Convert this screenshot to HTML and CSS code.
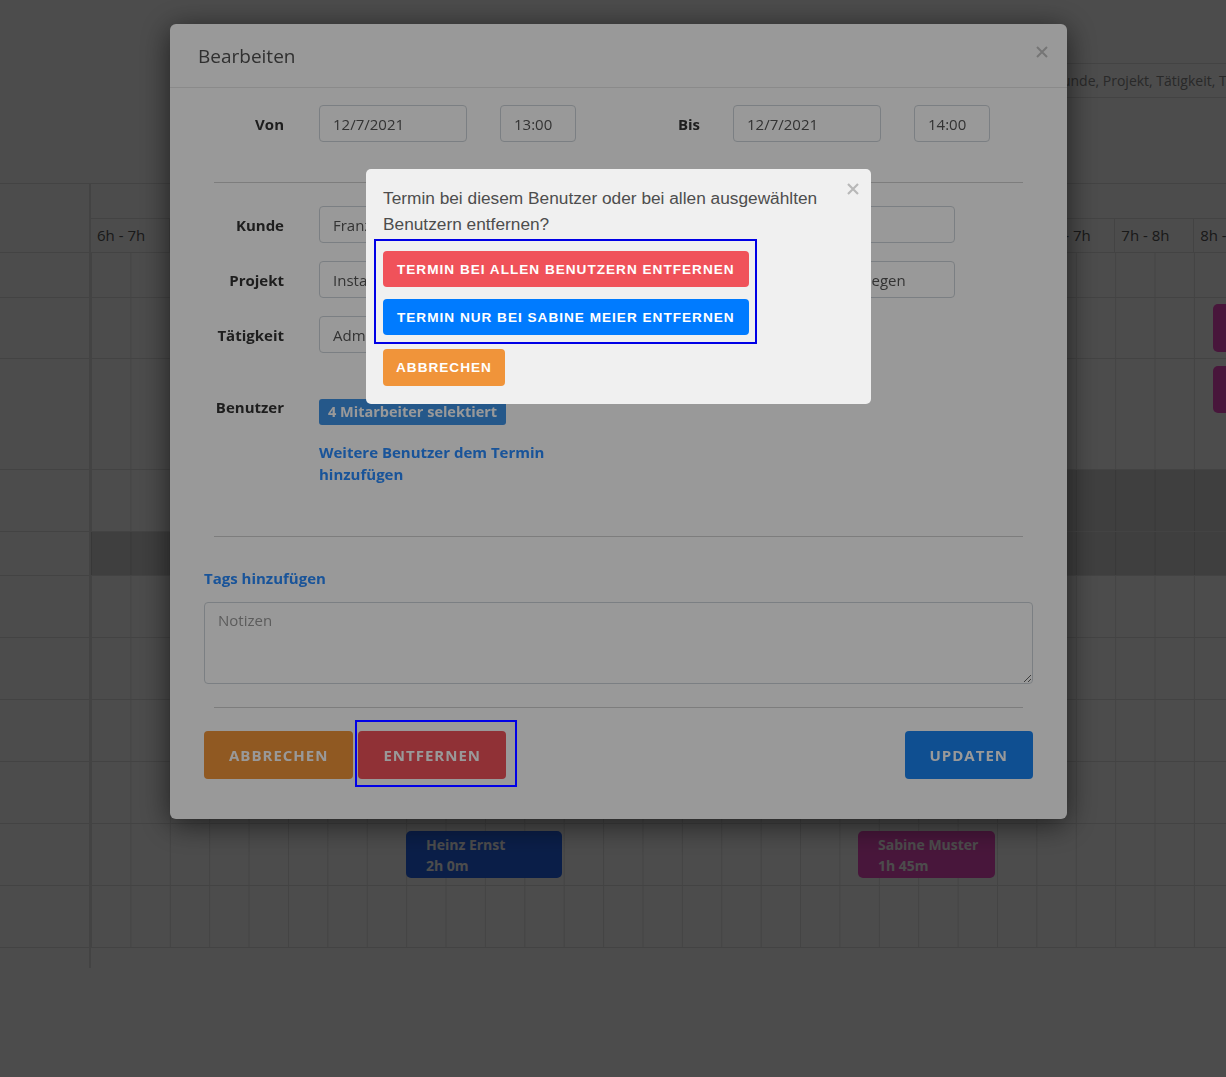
FILE: index.html
```html
<!DOCTYPE html>
<html lang="de">
  <head>
    <meta charset="UTF-8" />
    <meta name="viewport" content="width=device-width, initial-scale=1.0" />
    <title>Planer - Termin bearbeiten</title>
    <link rel="stylesheet" href="styles.css">
  </head>

  <body>
    <div class="topbar">
      <input class="search" type="text" placeholder="Suche nach Kunde, Projekt, Tätigkeit, Tags" />
    </div>

    <div class="calendar">
      <div class="cal-head">
        <div class="cal-name"></div>
        <div class="head-track">
          <div class="days">
            <div class="day">Dienstag, 7.12.2021</div>
            <div class="day">Mittwoch, 8.12.2021</div>
          </div>
          <div class="hours">
            <div class="hour">6h - 7h</div>
            <div class="hour">7h - 8h</div>
            <div class="hour">8h - 9h</div>
            <div class="hour">9h - 10h</div>
            <div class="hour">10h - 11h</div>
            <div class="hour">11h - 12h</div>
            <div class="hour">12h - 13h</div>
            <div class="hour">13h - 14h</div>
            <div class="hour">14h - 15h</div>
            <div class="hour">15h - 16h</div>
            <div class="hour">16h - 17h</div>
            <div class="hour">17h - 18h</div>
            <div class="hour">6h - 7h</div>
            <div class="hour">7h - 8h</div>
            <div class="hour">8h - 9h</div>
            <div class="hour">9h - 10h</div>
          </div>
        </div>
      </div>

      <div class="cal-row row-45"><div class="cal-name"></div><div class="cal-track"></div></div>
      <div class="cal-row row-61">
        <div class="cal-name"></div>
        <div class="cal-track">
          <div class="event event-pink event-top" style="left: 1122px; width: 137px">Sabine Meier<br />1h 45m</div>
        </div>
      </div>
      <div class="cal-row row-111">
        <div class="cal-name"></div>
        <div class="cal-track">
          <div class="event event-pink" style="left: 1122px; width: 137px">Sabine Meier<br />1h 45m</div>
        </div>
      </div>
      <div class="cal-row">
        <div class="cal-name"></div>
        <div class="cal-track">
          <div class="off-time" style="left: 945.6px"></div>
        </div>
      </div>
      <div class="cal-row row-44">
        <div class="cal-name"></div>
        <div class="cal-track">
          <div class="off-time" style="left: 0"></div>
        </div>
      </div>
      <div class="cal-row"><div class="cal-name"></div><div class="cal-track"></div></div>
      <div class="cal-row"><div class="cal-name"></div><div class="cal-track"></div></div>
      <div class="cal-row"><div class="cal-name"></div><div class="cal-track"></div></div>
      <div class="cal-row"><div class="cal-name"></div><div class="cal-track"></div></div>
      <div class="cal-row">
        <div class="cal-name"></div>
        <div class="cal-track">
          <div class="event event-blue" style="left: 315px; width: 156px">Heinz Ernst<br />2h 0m</div>
          <div class="event event-pink" style="left: 767px; width: 137px">Sabine Muster<br />1h 45m</div>
        </div>
      </div>
      <div class="cal-row"><div class="cal-name"></div><div class="cal-track"></div></div>
      <div class="cal-foot"><div class="cal-name"></div></div>
    </div>

    <div class="modal-layer">
      <div class="modal">
        <div class="modal-header">
          <h4 class="modal-title">Bearbeiten</h4>
          <svg class="modal-close" width="12" height="12" viewBox="0 0 12 12">
            <path d="M1 1 L11 11 M11 1 L1 11" stroke="#c4c4c4" stroke-width="2" fill="none" />
          </svg>
        </div>
        <div class="modal-body">
          <div class="section time-row">
            <label class="label">Von</label>
            <input class="field date" type="text" value="12/7/2021" />
            <input class="field time" type="text" value="13:00" />
            <label class="label bis">Bis</label>
            <input class="field date" type="text" value="12/7/2021" />
            <input class="field time" type="text" value="14:00" />
          </div>

          <hr class="divider" />

          <div class="section field-row first">
            <label class="label">Kunde</label>
            <input class="field wide" type="text" value="Franz Huber Elektrotechnik GmbH" />
          </div>
          <div class="section field-row">
            <label class="label">Projekt</label>
            <input class="field wide" type="text" value="Installation Netzwerke und Serverraum im Hauptgebäude, alle Kabel neu verlegen" />
          </div>
          <div class="section field-row">
            <label class="label">Tätigkeit</label>
            <input class="field medium" type="text" value="Administration" />
          </div>

          <div class="section user-row">
            <label class="label">Benutzer</label>
            <div class="user-col">
              <span class="badge">4 Mitarbeiter selektiert</span>
              <a class="link add-users" href="#">Weitere Benutzer dem Termin hinzufügen</a>
            </div>
          </div>

          <hr class="divider after-users" />

          <a class="link tags" href="#">Tags hinzufügen</a>
          <textarea class="notes" placeholder="Notizen"></textarea>

          <hr class="divider after-notes" />

          <div class="actions">
            <button class="btn btn-orange">Abbrechen</button>
            <button class="btn btn-red">Entfernen</button>
            <button class="btn btn-blue btn-update">Updaten</button>
          </div>
        </div>
      </div>
    </div>

    <div class="confirm-layer">
      <div class="confirm">
        <svg class="confirm-close" width="12" height="12" viewBox="0 0 12 12">
          <path d="M1 1 L11 11 M11 1 L1 11" stroke="#b8b8b8" stroke-width="2.2" fill="none" />
        </svg>
        <p class="confirm-text">Termin bei diesem Benutzer oder bei allen ausgewählten Benutzern entfernen?</p>
        <div class="choice-group">
          <button class="c-btn c-red">Termin bei allen Benutzern entfernen</button>
          <button class="c-btn c-blue">Termin nur bei Sabine Meier entfernen</button>
        </div>
        <button class="c-btn c-orange c-cancel">Abbrechen</button>
      </div>
      <div class="marker"></div>
    </div>
  </body>
</html>
```

FILE: styles.css
```css
* {
  box-sizing: border-box;
}

body {
  margin: 0;
  background-color: #fff;
  font-family: "Open Sans", sans-serif;
  font-size: 15px;
  color: #333;
  overflow: hidden;
}

/* calendar behind the dialogs */
.topbar {
  height: 184px;
  padding-top: 63px;
  border-bottom: 1px solid #e3e3e3;
}
.search {
  display: block;
  margin-left: 962px;
  width: 420px;
  height: 35px;
  padding: 0 12px;
  border: 1px solid #e3e3e3;
  font: 14px "Open Sans", sans-serif;
  color: #333;
}
.search::placeholder {
  color: #8a8a8a;
}

.cal-head,
.cal-row {
  display: flex;
  height: 62px;
  border-bottom: 1px solid #e3e3e3;
}
.cal-head {
  height: 69px;
}
.row-45 {
  height: 45px;
}
.row-61 {
  height: 61px;
}
.row-111 {
  height: 111px;
}
.row-44 {
  height: 44px;
}
.cal-foot {
  display: flex;
  height: 20px;
}
.cal-name {
  width: 91px;
  flex-shrink: 0;
  border-right: 2px solid #e3e3e3;
}
.head-track {
  flex: 1;
  overflow: hidden;
}
.days,
.hours {
  display: flex;
}
.days {
  height: 35px;
  border-bottom: 1px solid #e3e3e3;
}
.day {
  width: 945.6px;
  flex-shrink: 0;
  line-height: 34px;
  text-align: center;
  color: #555;
  border-right: 1px solid #e3e3e3;
}
.hour {
  width: 78.8px;
  flex-shrink: 0;
  height: 33px;
  line-height: 33px;
  padding-left: 6px;
  white-space: nowrap;
  color: #555;
  border-right: 1px solid #e3e3e3;
}
.cal-track {
  flex: 1;
  position: relative;
  overflow: hidden;
  background-image: linear-gradient(to right, #e3e3e3 1px, transparent 1px);
  background-size: 39.4px 100%;
}
.off-time {
  position: absolute;
  top: 0;
  bottom: 0;
  right: 0;
  background-color: rgba(0, 0, 0, 0.17);
}
.event {
  position: absolute;
  top: 7px;
  height: 47px;
  padding: 3px 20px;
  border-radius: 5px;
  color: #fff;
  font-size: 14px;
  font-weight: 700;
  line-height: 21px;
  white-space: nowrap;
  overflow: hidden;
}
.event-top {
  top: 6px;
  height: 48px;
}
.event-blue {
  background-color: #2466f2;
}
.event-pink {
  background-color: #f24cc6;
}

/* edit dialog */
.modal-layer {
  position: fixed;
  inset: 0;
  background-color: rgba(0, 0, 0, 0.5);
}
.modal {
  margin: 24px 0 0 170px;
  width: 897px;
  background-color: #fff;
  border-radius: 6px;
  box-shadow: 0 5px 30px rgba(0, 0, 0, 0.6);
}
.modal-header {
  height: 64px;
  display: flex;
  align-items: center;
  justify-content: space-between;
  padding: 0 19px 0 28px;
  border-bottom: 1px solid #e6e6e6;
}
.modal-title {
  margin: 0;
  font-size: 19px;
  font-weight: 400;
  color: #505050;
}
.modal-close {
  align-self: flex-start;
  margin-top: 22px;
}
.modal-body {
  padding: 17px 34px 40px;
}
.section {
  margin: 0 10px;
}
.time-row,
.field-row {
  display: flex;
  align-items: center;
  height: 37px;
}
.field-row {
  margin-top: 18px;
}
.field-row.first {
  margin-top: 23px;
}
.label {
  width: 70px;
  flex-shrink: 0;
  text-align: right;
  font-weight: 700;
  color: #333;
}
.label.bis {
  margin-left: 54px;
}
.field {
  height: 37px;
  margin-left: 35px;
  padding: 0 13px;
  border: 1px solid #ced4da;
  border-radius: 4px;
  font: 15px "Open Sans", sans-serif;
  color: #555;
  background-color: #fff;
}
.field.date {
  width: 148px;
}
.field.time {
  width: 76px;
  margin-left: 33px;
}
.bis + .field.date {
  margin-left: 33px;
}
.field.wide {
  width: 636px;
}
.field.medium {
  width: 500px;
}
.user-row {
  display: flex;
  align-items: flex-start;
  margin-top: 46px;
}
.user-row .label {
  line-height: 16px;
}
.user-col {
  margin-left: 35px;
}
.badge {
  display: inline-block;
  height: 26px;
  padding: 0 9px;
  border-radius: 3px;
  background-color: #3f93e6;
  color: #fff;
  font-size: 14.5px;
  font-weight: 700;
  line-height: 26px;
}
.link {
  color: #2a8cff;
  font-weight: 700;
  text-decoration: none;
  line-height: 22px;
}
.add-users {
  display: block;
  max-width: 240px;
  margin-top: 16px;
}
.divider {
  margin: 40px 10px 0;
  border: 0;
  border-top: 1px solid #d0d0d0;
}
.divider.after-users {
  margin-top: 51px;
}
.divider.after-notes {
  margin-top: 23px;
}
.tags {
  display: block;
  margin-top: 31px;
  line-height: 21px;
}
.notes {
  display: block;
  width: 100%;
  height: 82px;
  margin-top: 13px;
  padding: 7px 13px;
  border: 1px solid #ced4da;
  border-radius: 4px;
  font: 15px/21px "Open Sans", sans-serif;
  color: #555;
}
.notes::placeholder {
  color: #9a9a9a;
}
.actions {
  display: flex;
  gap: 5px;
  margin-top: 23px;
}
.btn {
  height: 48px;
  padding: 0 25px;
  border: 0;
  border-radius: 4px;
  color: #fff;
  font: 700 15px "Open Sans", sans-serif;
  letter-spacing: 1px;
  text-transform: uppercase;
}
.btn-orange {
  background-color: #f0943a;
}
.btn-red {
  background-color: #f0525a;
}
.btn-blue {
  background-color: #1a84f2;
}
.btn-update {
  margin-left: auto;
}

/* confirm dialog on top */
.confirm-layer {
  position: fixed;
  inset: 0;
  background-color: rgba(0, 0, 0, 0.4);
}
.confirm {
  position: relative;
  margin: 169px 0 0 366px;
  width: 505px;
  padding: 16px 17px 18px;
  border-radius: 5px;
  background-color: #f0f0f0;
  font-family: "Liberation Sans", Arial, sans-serif;
}
.confirm-close {
  position: absolute;
  top: 14px;
  right: 12px;
}
.confirm-text {
  margin: 0;
  font-size: 17.3px;
  line-height: 26px;
  color: #4d4d4d;
}
.choice-group {
  display: flex;
  flex-direction: column;
  gap: 12px;
  width: fit-content;
  margin: 2px 0 0 -9px;
  padding: 10px 6px 7px 7px;
  border: 2px solid #0000e6;
}
.c-btn {
  display: block;
  height: 36px;
  padding: 0 14px;
  border: 0;
  border-radius: 4px;
  color: #fff;
  font: 700 13.6px "Liberation Sans", Arial, sans-serif;
  letter-spacing: 1px;
  text-transform: uppercase;
  white-space: nowrap;
}
.c-red {
  background-color: #f0525a;
}
.c-blue {
  background-color: #007bff;
}
.c-orange {
  background-color: #f0943a;
}
.c-cancel {
  height: 37px;
  margin-top: 5px;
  padding: 0 13px;
}
.marker {
  position: absolute;
  left: 355px;
  top: 720px;
  width: 162px;
  height: 67px;
  border: 2px solid #0000e6;
}
```
